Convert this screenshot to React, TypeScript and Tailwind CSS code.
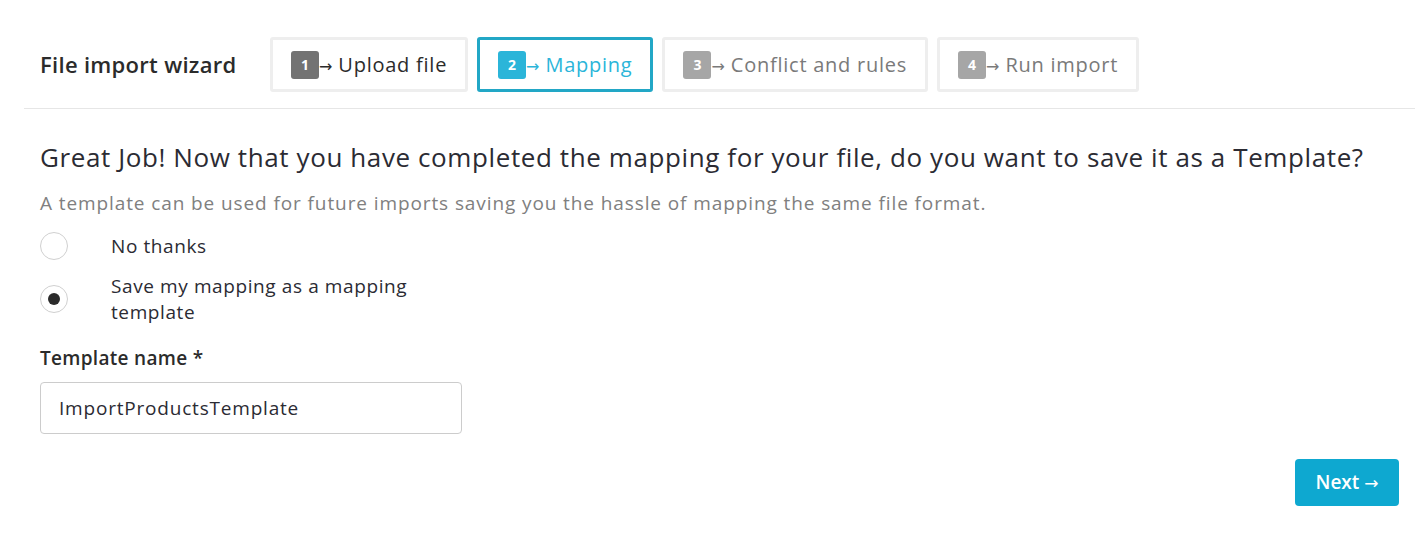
import { useState } from "react";

type Step = { n: number; label: string; state: "done" | "active" | "todo" };

const steps: Step[] = [
  { n: 1, label: "Upload file", state: "done" },
  { n: 2, label: "Mapping", state: "active" },
  { n: 3, label: "Conflict and rules", state: "todo" },
  { n: 4, label: "Run import", state: "todo" },
];

function StepTab({ step }: { step: Step }) {
  const box =
    step.state === "active" ? "border-[#22a7c6]" : "border-[#eeeeee]";
  const badge =
    step.state === "active"
      ? "bg-[#2bb5d9]"
      : step.state === "done"
        ? "bg-[#737373]"
        : "bg-[#a6a6a6]";
  const text =
    step.state === "active"
      ? "text-[#2bb5d9]"
      : step.state === "done"
        ? "text-[#2b2b2b]"
        : "text-[#7a7a7a]";
  return (
    <div
      className={`flex h-[55px] items-center rounded-[3px] border-[3px] bg-white px-[18px] ${box}`}
    >
      <span
        className={`flex h-[28px] w-[28px] items-center justify-center rounded-[3px] text-[14px] font-bold text-white ${badge}`}
      >
        {step.n}
      </span>
      <span className={`text-[20px] tracking-[0.75px] ${text}`}>
        <span className="font-['DejaVu_Sans',sans-serif] text-[16px] tracking-normal">→</span> {step.label}
      </span>
    </div>
  );
}

function Radio({ checked }: { checked: boolean }) {
  return (
    <span className="flex h-[28px] w-[28px] shrink-0 items-center justify-center rounded-full border border-[#d0d0d0] bg-white">
      {checked && <span className="h-[12px] w-[12px] rounded-full bg-[#2b2b2b]" />}
    </span>
  );
}

export default function App() {
  const [choice, setChoice] = useState("save");
  const [name, setName] = useState("ImportProductsTemplate");

  return (
    <div className="min-h-[534px] bg-white font-['Open_Sans',sans-serif] text-[#2b2b33]">
      <div className="ml-[24px] mr-[12px] flex items-center border-b border-[#e6e6e6] pb-[16px] pt-[37px]">
        <h1 className="ml-[16px] w-[230px] text-[22px] font-semibold tracking-[0.3px] text-[#2b2b2b]">
          File import wizard
        </h1>
        <div className="flex gap-[9px]">
          {steps.map((s) => (
            <StepTab key={s.n} step={s} />
          ))}
        </div>
      </div>

      <div className="px-[40px] pt-[30px]">
        <h2 className="whitespace-nowrap text-[26px] leading-[36px] tracking-[0.6px] text-[#2b2b33]">
          Great Job! Now that you have completed the mapping for your file, do you want to save it as a Template?
        </h2>
        <p className="mt-[16px] text-[19px] leading-[24px] tracking-[0.9px] text-[#808080]">
          A template can be used for future imports saving you the hassle of mapping the same file format.
        </p>

        <div className="mt-[17px] flex flex-col gap-[13px]">
          <label className="flex cursor-pointer items-center">
            <input
              type="radio"
              className="sr-only"
              checked={choice === "no"}
              onChange={() => setChoice("no")}
            />
            <Radio checked={choice === "no"} />
            <span className="ml-[43px] text-[19px] leading-[26px] tracking-[0.6px]">No thanks</span>
          </label>
          <label className="flex cursor-pointer items-center">
            <input
              type="radio"
              className="sr-only"
              checked={choice === "save"}
              onChange={() => setChoice("save")}
            />
            <Radio checked={choice === "save"} />
            <span className="ml-[43px] w-[345px] text-[19px] leading-[26px] tracking-[0.6px]">
              Save my mapping as a mapping template
            </span>
          </label>
        </div>

        <label className="mt-[21px] block text-[19px] font-semibold leading-[24px] tracking-[0.3px] text-[#2b2b2b]">
          Template name *
        </label>
        <input
          value={name}
          onChange={(e) => setName(e.target.value)}
          className="mt-[12px] h-[52px] w-[422px] rounded-[4px] border border-[#cccccc] px-[18px] text-[19px] tracking-[0.8px] text-[#2b2b33] outline-none"
        />
      </div>

      <div className="flex justify-end px-[28px] pt-[25px]">
        <button
          type="button"
          className="h-[47px] w-[104px] rounded-[4px] bg-[#0ea8d0] text-[19px] font-semibold text-white"
        >
          Next <span className="font-['DejaVu_Sans',sans-serif] text-[17px] font-normal">→</span>
        </button>
      </div>
    </div>
  );
}
